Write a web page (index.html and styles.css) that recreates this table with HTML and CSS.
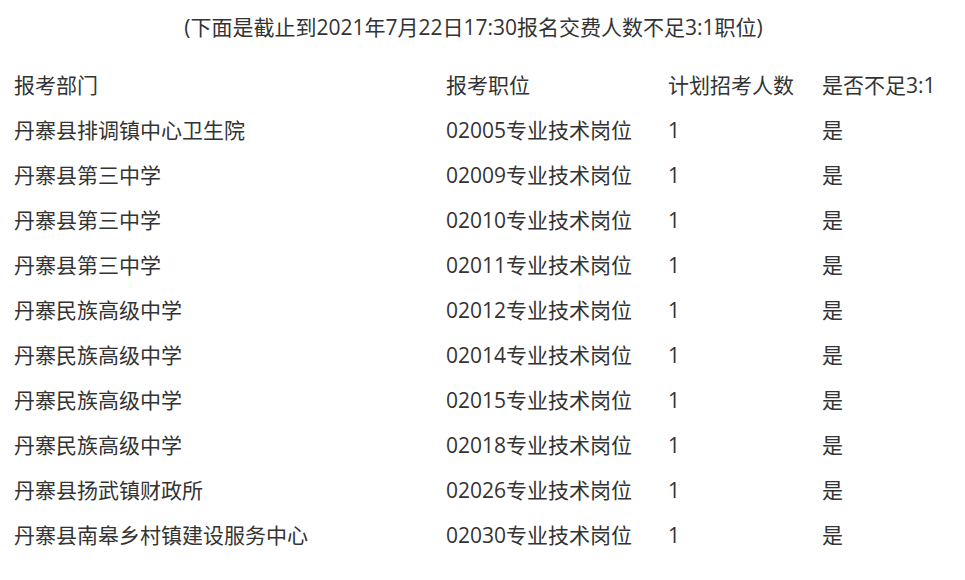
FILE: index.html
```html
<!DOCTYPE html>
<html lang="zh-CN">
<head>
<meta charset="utf-8">
<link rel="stylesheet" href="styles.css">
</head>
<body>
<div class="page">
  <p class="title">(下面是截止到2021年7月22日17:30报名交费人数不足3:1职位)</p>
  <div class="table">
    <div class="row head"><span>报考部门</span><span>报考职位</span><span>计划招考人数</span><span>是否不足3:1</span></div>
    <div class="row"><span>丹寨县排调镇中心卫生院</span><span>02005专业技术岗位</span><span>1</span><span>是</span></div>
    <div class="row"><span>丹寨县第三中学</span><span>02009专业技术岗位</span><span>1</span><span>是</span></div>
    <div class="row"><span>丹寨县第三中学</span><span>02010专业技术岗位</span><span>1</span><span>是</span></div>
    <div class="row"><span>丹寨县第三中学</span><span>02011专业技术岗位</span><span>1</span><span>是</span></div>
    <div class="row"><span>丹寨民族高级中学</span><span>02012专业技术岗位</span><span>1</span><span>是</span></div>
    <div class="row"><span>丹寨民族高级中学</span><span>02014专业技术岗位</span><span>1</span><span>是</span></div>
    <div class="row"><span>丹寨民族高级中学</span><span>02015专业技术岗位</span><span>1</span><span>是</span></div>
    <div class="row"><span>丹寨民族高级中学</span><span>02018专业技术岗位</span><span>1</span><span>是</span></div>
    <div class="row"><span>丹寨县扬武镇财政所</span><span>02026专业技术岗位</span><span>1</span><span>是</span></div>
    <div class="row"><span>丹寨县南皋乡村镇建设服务中心</span><span>02030专业技术岗位</span><span>1</span><span>是</span></div>
  </div>
</div>
</body>
</html>
```

FILE: styles.css
```css
html, body {
  margin: 0;
  padding: 0;
  background: #fff;
}
.page {
  width: 947px;
  color: #333;
  font-family: "Open Sans", "Noto Sans CJK SC", sans-serif;
  font-size: 21px;
}
.title {
  margin: 0;
  height: 55px;
  line-height: 55px;
  text-align: center;
}
.table {
  padding-left: 14px;
  padding-top: 8px;
}
.row {
  display: grid;
  grid-template-columns: 432px 222px 154px 1fr;
  height: 45px;
  line-height: 45px;
  white-space: nowrap;
}
```
